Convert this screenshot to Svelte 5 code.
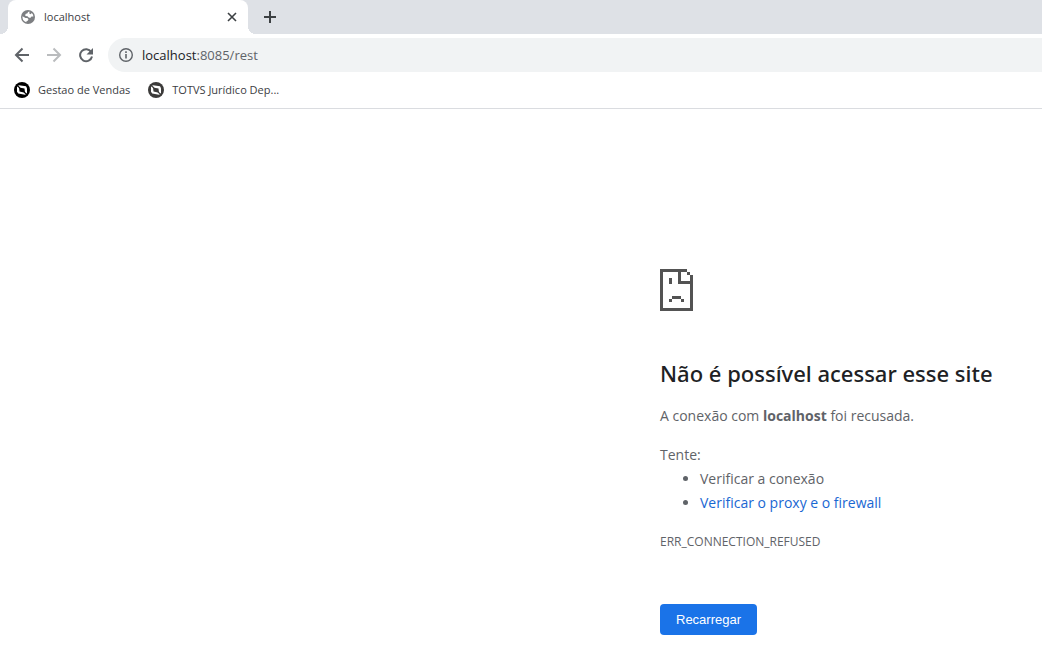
<script>
    const bookmarks = [
        { id: 1, title: 'Gestao de Vendas', color: '#000000' },
        { id: 2, title: 'TOTVS Jurídico Dep...', color: '#3c3b3a' },
    ];

    let host = 'localhost';
</script>

<div class="browser">
    <header>
        <div class="tab-strip">
            <div class="tab">
                <svg width="16" height="16" viewBox="0 0 16 16">
                    <circle cx="8" cy="8" r="7" fill="#7d7f82" />
                    <path d="M9.500 2.600 8 3 7.500 4.300 5.500 5 5.300 7l2.200.3L9 8.700h1.600l.9-1.200h1.900A5.500 5.500 0 0 0 11.800 4l-1.200 1.200-1.300-.6z" fill="#fff" />
                    <path d="M2.500 7.300 5.500 9h1.800l1.200 1.300-.8 1.400-1.200.5-.2 1.100A5.600 5.600 0 0 1 2.500 7.300z" fill="#fff" />
                </svg>
                <span class="tab-title">{host}</span>
                <button class="icon-btn close" aria-label="Fechar">
                    <svg width="16" height="16" viewBox="0 0 16 16" fill="none" stroke="#3c4043" stroke-width="1.600"><path d="M4 4l8 8M12 4l-8 8" /></svg>
                </button>
            </div>
            <button class="icon-btn" aria-label="Nova guia">
                <svg width="16" height="16" viewBox="0 0 16 16" fill="none" stroke="#3c4043" stroke-width="2"><path d="M8 2v12M2 8h12" /></svg>
            </button>
        </div>

        <div class="toolbar">
            <button class="icon-btn" aria-label="Voltar">
                <svg width="16" height="16" viewBox="0 0 16 16" fill="none" stroke="#5f6368" stroke-width="2"><path d="M15 8H2.500M8.500 1.500 2 8l6.500 6.500" /></svg>
            </button>
            <button class="icon-btn" aria-label="Avançar" disabled>
                <svg width="16" height="16" viewBox="0 0 16 16" fill="none" stroke="#babcbe" stroke-width="2"><path d="M1 8h12.500M7.500 1.500 14 8l-6.500 6.500" /></svg>
            </button>
            <button class="icon-btn" aria-label="Atualizar">
                <svg width="16" height="16" viewBox="0 0 16 16"><path d="M13.200 5A6 6 0 1 0 14 9.500" fill="none" stroke="#5f6368" stroke-width="2" /><path d="M15 1v6.500H8.500z" fill="#5f6368" /></svg>
            </button>
            <div class="address">
                <svg width="16" height="16" viewBox="0 0 16 16" fill="none" stroke="#5f6368"><circle cx="8" cy="8" r="6.300" stroke-width="1.400" /><path d="M8 7v4.500M8 4.300V6" stroke-width="1.600" /></svg>
                <span>{host}<span class="path">:8085/rest</span></span>
            </div>
        </div>

        <nav class="bookmarks">
            {#each bookmarks as item}
                <a href="#{item.id}">
                    <svg width="16" height="16" viewBox="0 0 16 16">
                        <circle cx="8" cy="8" r="8" fill={item.color} />
                        <path d="M3 4.500 5 3.200 12 4.300 13 6.200V11.500L11 12.800 4.200 11.500 3 9.800z" fill="#fff" />
                        <path d="M5 5.500 10.500 6.500 11 10.800 5.500 9.600z" fill={item.color} />
                        <path d="M2.500 3 6 6M10 10l3.500 3" stroke={item.color} stroke-width="1.200" />
                    </svg>
                    {item.title}
                </a>
            {/each}
        </nav>
    </header>

    <main>
        <div class="error">
            <svg class="sad" width="33" height="42" viewBox="0 0 11 14" fill="#535353" shape-rendering="crispEdges">
                <path d="M0 0h9v1H7v3h4v1H6V1H1v12h9V5h1v9H0zM9 1h1v1H9zM10 2h1v3h-1zM3 3h1v2H3zM4 9h3v1H4zM3 10h1v1H3zM7 10h1v1H7z" />
            </svg>
            <h1>Não é possível acessar esse site</h1>
            <p>A conexão com <strong>{host}</strong> foi recusada.</p>
            <div class="suggestions">
                Tente:
                <ul>
                    <li>Verificar a conexão</li>
                    <li><a href="#firewall">Verificar o proxy e o firewall</a></li>
                </ul>
            </div>
            <div class="code">ERR_CONNECTION_REFUSED</div>
            <button class="reload">Recarregar</button>
        </div>
    </main>
</div>

<style>
    :global(body) {
        margin: 0;
        background: #fff;
    }

    .browser {
        font-family: "Segoe UI", "Open Sans", "Noto Sans", sans-serif;
        font-size: 11px;
        line-height: 14px;
        color: #3c4043;
        overflow: hidden;
    }

    .tab-strip {
        display: flex;
        align-items: center;
        gap: 14px;
        height: 34px;
        padding-left: 8px;
        background: #dee1e6;
    }

    .tab {
        position: relative;
        display: flex;
        align-items: center;
        gap: 8px;
        box-sizing: border-box;
        width: 240px;
        height: 34px;
        padding: 0 8px 0 12px;
        background: #fff;
        border-radius: 8px 8px 0 0;
    }

    /* curved feet on both sides of the active tab */
    .tab::before,
    .tab::after {
        content: "";
        position: absolute;
        bottom: 0;
        width: 8px;
        height: 8px;
    }

    .tab::before {
        left: -8px;
        background: radial-gradient(circle at 0 0, transparent 8px, #fff 8px);
    }

    .tab::after {
        right: -8px;
        background: radial-gradient(circle at 100% 0, transparent 8px, #fff 8px);
    }

    .tab-title {
        flex: 1;
    }

    .icon-btn {
        display: flex;
        flex: none;
        padding: 0;
        border: none;
        background: none;
        cursor: pointer;
    }

    .toolbar {
        display: flex;
        align-items: center;
        gap: 16px;
        padding: 4px 0 4px 14px;
    }

    .address {
        display: flex;
        flex: 1;
        align-items: center;
        gap: 8px;
        height: 34px;
        margin-left: -2px;
        padding-left: 10px;
        border-radius: 17px 0 0 17px;
        background: #f1f3f4;
        color: #202124;
        font-size: 13px;
        line-height: 18px;
    }

    .path {
        color: #5f6368;
    }

    .bookmarks {
        display: flex;
        gap: 18px;
        height: 32px;
        padding: 0 14px;
        border-bottom: 1px solid #dadce0;
    }

    .bookmarks a {
        display: flex;
        align-items: center;
        gap: 8px;
        height: 28px;
        color: #3c4043;
        text-decoration: none;
        white-space: nowrap;
    }

    main {
        display: grid;
        grid-template-columns: 660fr 382fr;
        padding: 160px 0 23px;
        color: #5f6368;
        font-size: 14px;
        line-height: 24px;
    }

    .error {
        grid-column: 2;
        min-width: 0;
    }

    .sad {
        display: block;
        margin-bottom: 47px;
    }

    h1 {
        margin: 0 0 16px;
        color: #202124;
        font-family: "Segoe UI", "Noto Sans", sans-serif;
        font-size: 22px;
        font-weight: 500;
        line-height: 30px;
        white-space: nowrap;
    }

    p {
        margin: 0 0 15px;
    }

    ul {
        margin: 0;
        padding-left: 40px;
    }

    li a {
        color: #1967d2;
        text-decoration: none;
    }

    .code {
        margin-top: 15px;
        font-size: 12px;
    }

    .reload {
        margin-top: 50px;
        padding: 8px 16px;
        border: none;
        border-radius: 4px;
        background: #1a73e8;
        color: #fff;
        font-family: "Liberation Sans", Arial, sans-serif;
        font-size: 13px;
        line-height: 15px;
        cursor: pointer;
    }
</style>
